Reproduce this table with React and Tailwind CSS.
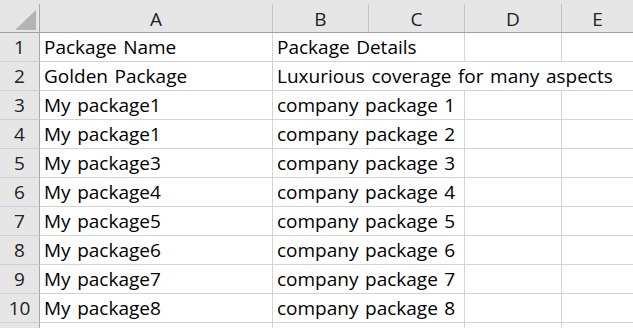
import React from "react";

const rows = [
  ["Package Name", "Package Details"],
  ["Golden Package", "Luxurious coverage for many aspects"],
  ["My package1", "company package 1"],
  ["My package1", "company package 2"],
  ["My package3", "company package 3"],
  ["My package4", "company package 4"],
  ["My package5", "company package 5"],
  ["My package6", "company package 6"],
  ["My package7", "company package 7"],
  ["My package8", "company package 8"],
];

const font = { fontFamily: "'Open Sans', 'Noto Sans', sans-serif" };

function HeaderCell({ children, last }) {
  return (
    <div className="h-[33px] bg-[#e6e6e6] border-b border-[#9f9f9f] flex flex-col">
      <div
        className={`mt-[4px] h-[28px] flex items-end justify-center pb-[2px] text-[19px] leading-[22px] text-[#222] ${
          last ? "" : "border-r border-[#c4c4c4]"
        }`}
      >
        {children}
      </div>
    </div>
  );
}

const txt =
  "h-[29px] border-b border-[#d4d4d4] flex items-end pl-[4px] pb-[3px] text-[19px] leading-[22px] [word-spacing:1.6px] text-black whitespace-nowrap";

export default function App() {
  return (
    <div className="w-[633px] h-[328px] overflow-hidden bg-white" style={font}>
      <div className="grid grid-cols-[40px_233px_96px_96px_97px_1fr]">
        <div className="h-[33px] bg-[#e6e6e6] border-b border-[#9f9f9f] flex flex-col">
          <div className="mt-[4px] h-[28px] border-r border-[#a8a8a8] relative">
            <svg
              className="absolute left-[15px] top-[6px]"
              width="22"
              height="21"
              viewBox="0 0 22 21"
            >
              <polygon points="21,0 21,20 0,20" fill="#b4b4b4" />
            </svg>
          </div>
        </div>
        <HeaderCell>A</HeaderCell>
        <HeaderCell>B</HeaderCell>
        <HeaderCell>C</HeaderCell>
        <HeaderCell>D</HeaderCell>
        <HeaderCell last>E</HeaderCell>

        {rows.map((r, i) => (
          <React.Fragment key={i}>
            <div className="h-[29px] bg-[#e6e6e6] border-b border-r border-b-[#d0d0d0] border-r-[#a8a8a8] flex items-end justify-center pb-[3px] text-[19px] leading-[22px] text-[#222]">
              {i + 1}
            </div>
            <div className={`${txt} border-r`}>{r[0]}</div>
            {i === 1 ? (
              <div className={`${txt} col-span-4`}>{r[1]}</div>
            ) : (
              <>
                <div className={`${txt} col-span-2 border-r`}>{r[1]}</div>
                <div className="h-[29px] border-b border-r border-[#d4d4d4]" />
                <div className="h-[29px] border-b border-[#d4d4d4]" />
              </>
            )}
          </React.Fragment>
        ))}
        <div className="h-[29px] bg-[#e6e6e6] border-r border-[#a8a8a8]" />
        <div className="h-[29px] border-r border-[#d4d4d4]" />
        <div className="col-span-2 h-[29px] border-r border-[#d4d4d4]" />
        <div className="h-[29px] border-r border-[#d4d4d4]" />
        <div className="h-[29px]" />
      </div>
    </div>
  );
}
